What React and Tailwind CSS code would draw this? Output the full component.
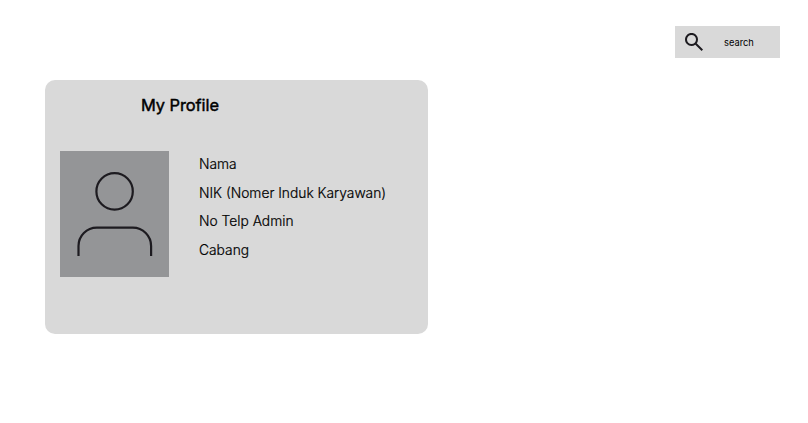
const fields = ["Nama", "NIK (Nomer Induk Karyawan)", "No Telp Admin", "Cabang"];

function SearchIcon() {
  return (
    <svg className="ml-[7.5px] size-[24px] shrink-0" viewBox="0 0 24 24" fill="#1d1b20">
      <path d="m19.6 21-6.3-6.3A6.1 6.1 0 0 1 9.5 16a6.27 6.27 0 0 1-4.613-1.888C3.63 12.854 3 11.317 3 9.5s.63-3.354 1.887-4.613C6.146 3.63 7.683 3 9.5 3s3.354.63 4.613 1.887C15.37 6.146 16 7.683 16 9.5a6.1 6.1 0 0 1-1.3 3.8l6.3 6.3zM9.5 14q1.875 0 3.188-1.312Q14 11.375 14 9.5t-1.312-3.188T9.5 5 6.313 6.313 5 9.5t1.313 3.188T9.5 14" />
    </svg>
  );
}

function Avatar() {
  return (
    <svg className="h-[126px] w-[109px] shrink-0 bg-[#949597]" viewBox="0 0 109 126" fill="none" stroke="#1d1b20" strokeWidth="2.2">
      <circle cx="54.6" cy="40.4" r="18.2" />
      <path d="M18.5 105V95a18.3 18.3 0 0 1 18.3-18.3h36A18.3 18.3 0 0 1 91.1 95v10" />
    </svg>
  );
}

export default function App() {
  return (
    <main className="h-[423px] w-[808px] overflow-hidden bg-white font-['Inter',sans-serif] text-black">
      <header className="flex h-20 justify-end pt-[25.5px] pr-[28.5px]">
        <div className="flex h-[32.5px] w-[105px] items-center bg-[#d9d9d9]">
          <SearchIcon />
          <span className="ml-[18px] pt-[2px] text-[9.3px]">search</span>
        </div>
      </header>
      <section className="ml-[45px] h-[253.5px] w-[382.5px] rounded-[10px] bg-[#d9d9d9]">
        <h1 className="h-[71px] pt-[13px] pl-[96px] text-[16.4px] leading-6 font-normal tracking-[-0.05px] [-webkit-text-stroke:0.45px_black]">My Profile</h1>
        <div className="flex pl-[15px]">
          <Avatar />
          <ul className="-mt-px ml-[30px] text-[13.8px] leading-[28.5px] font-light whitespace-nowrap [-webkit-text-stroke:0.2px_black]">
            {fields.map((field) => <li key={field}>{field}</li>)}
          </ul>
        </div>
      </section>
    </main>
  );
}
